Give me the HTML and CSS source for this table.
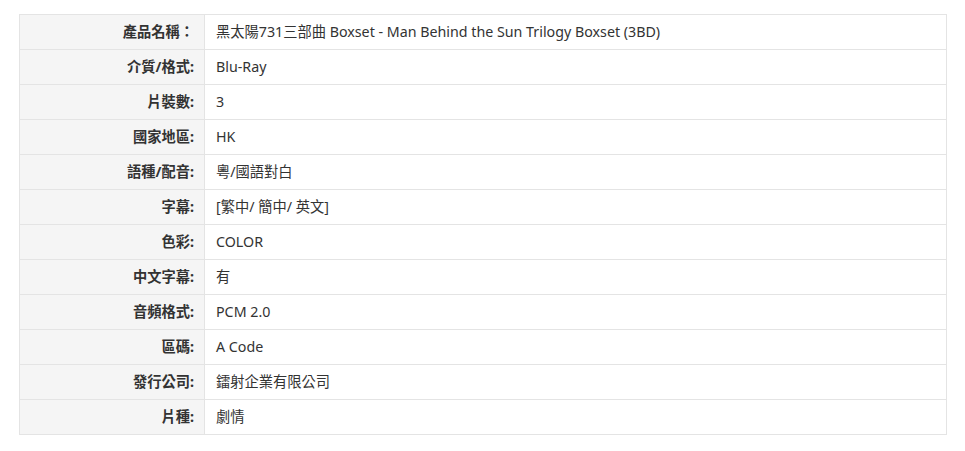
FILE: index.html
```html
<!DOCTYPE html>
<html>
<head>
<meta charset="utf-8">
<link rel="stylesheet" href="styles.css">
</head>
<body>
<div class="wrap">
<table class="spec">
<tr><th>產品名稱：</th><td>黑太陽731三部曲 Boxset - Man Behind the Sun Trilogy Boxset (3BD)</td></tr>
<tr><th>介質/格式:</th><td>Blu-Ray</td></tr>
<tr><th>片裝數:</th><td>3</td></tr>
<tr><th>國家地區:</th><td>HK</td></tr>
<tr><th>語種/配音:</th><td>粵/國語對白</td></tr>
<tr><th>字幕:</th><td>[繁中/ 簡中/ 英文]</td></tr>
<tr><th>色彩:</th><td>COLOR</td></tr>
<tr><th>中文字幕:</th><td>有</td></tr>
<tr><th>音頻格式:</th><td>PCM 2.0</td></tr>
<tr><th>區碼:</th><td>A Code</td></tr>
<tr><th>發行公司:</th><td>鐳射企業有限公司</td></tr>
<tr><th>片種:</th><td>劇情</td></tr>
</table>
</div>
</body>
</html>
```
FILE: styles.css
```css
html, body {
  margin: 0;
  padding: 0;
  background: #fff;
}
.wrap {
  padding: 14px 18px 0 19px;
}
.spec {
  width: 928px;
  border-collapse: collapse;
  font-family: "Noto Sans", "Noto Sans CJK TC", sans-serif;
  font-size: 14.25px;
  color: #333;
}
.spec th,
.spec td {
  border: 1px solid #e4e4e4;
  height: 35px;
  padding: 0;
  box-sizing: border-box;
  line-height: 20px;
}
.spec th {
  width: 185px;
  background: #f5f5f5;
  text-align: right;
  font-weight: bold;
  padding-right: 10px;
}
.spec td {
  text-align: left;
  font-weight: normal;
  padding-left: 11px;
}
```
